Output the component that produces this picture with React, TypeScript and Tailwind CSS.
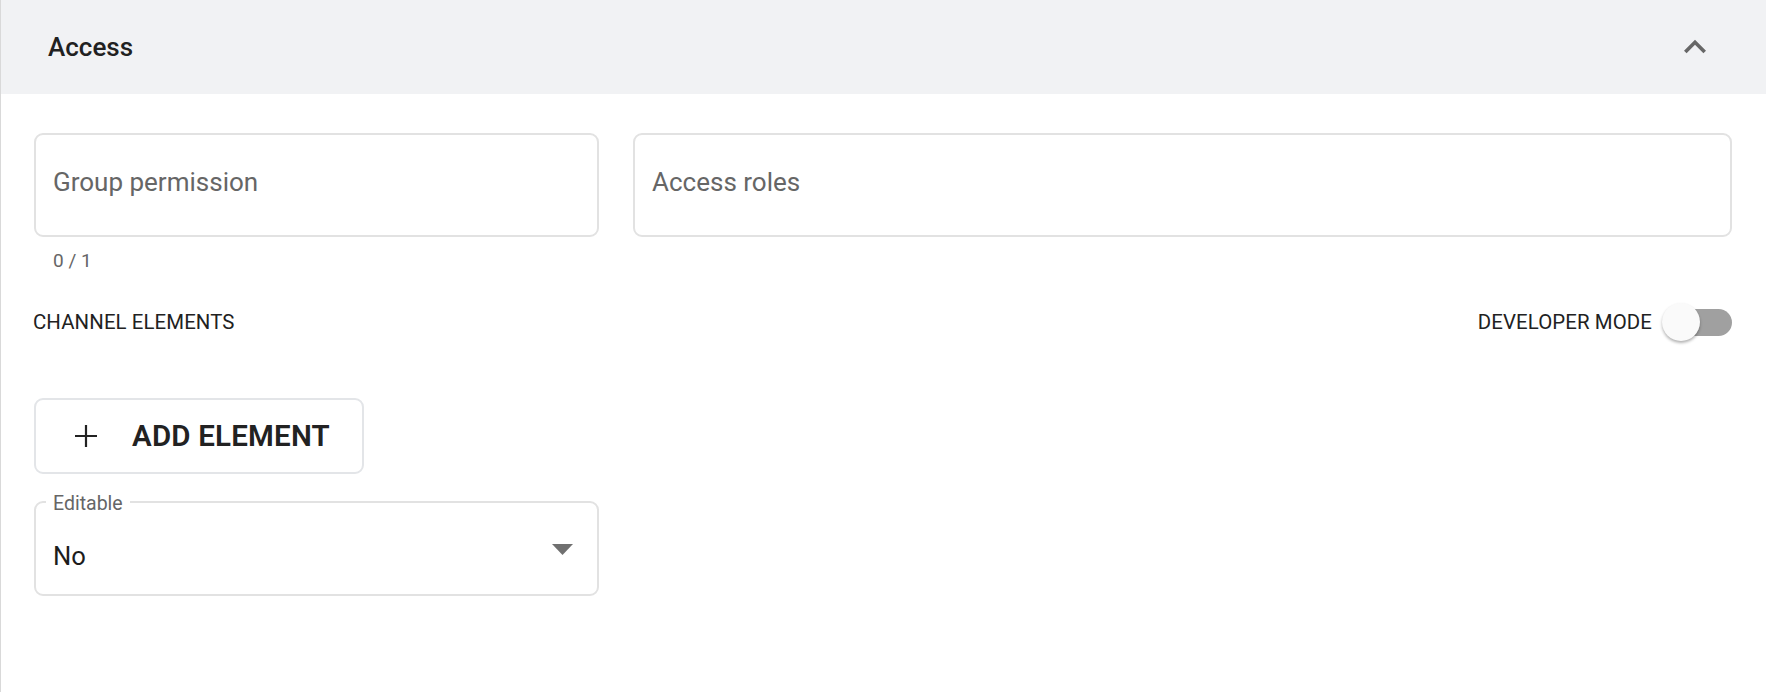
import { useState } from "react";

function ChevronUp() {
  return (
    <svg width="44" height="44" viewBox="0 0 24 24" className="text-[#676767]">
      <path fill="currentColor" d="M12 8l-6 6 1.41 1.41L12 10.83l4.59 4.58L18 14z" />
    </svg>
  );
}

function PlusIcon() {
  return (
    <svg width="24" height="24" viewBox="0 0 24 24" className="text-[#222]">
      <path d="M12 1v22M1 12h22" stroke="currentColor" strokeWidth="2.2" fill="none" />
    </svg>
  );
}

export default function App() {
  const [devMode, setDevMode] = useState(false);

  return (
    <div className="min-h-screen bg-white border-l border-[#d9d9d9] font-['Roboto',sans-serif] text-[#212121]">
      {/* Header */}
      <div className="h-[94px] bg-[#f1f2f4] flex items-center justify-between pl-[47px] pr-[49px]">
        <span className="text-[26px] font-medium">Access</span>
        <ChevronUp />
      </div>

      <div className="pl-[33px] pr-[34px] pt-[39px]">
        {/* Inputs */}
        <div className="flex gap-[34px]">
          <div className="w-[565px]">
            <div className="h-[104px] border-2 border-[#e2e2e2] rounded-[9px] flex items-center pl-[17px]">
              <span className="text-[26px] text-[#666] -mt-[5px]">Group permission</span>
            </div>
            <div className="mt-[13px] pl-[19px] text-[19px] leading-[22px] text-[#666]">0 / 1</div>
          </div>
          <div className="flex-1">
            <div className="h-[104px] border-2 border-[#e2e2e2] rounded-[9px] flex items-center pl-[17px]">
              <span className="text-[26px] text-[#666] -mt-[5px]">Access roles</span>
            </div>
          </div>
        </div>

        {/* Channel elements row */}
        <div className="mt-[30px] h-[40px] flex items-center justify-between">
          <span className="-ml-[1px] text-[20.4px] tracking-[0.1px]">CHANNEL ELEMENTS</span>
          <div className="flex items-center gap-[10px]">
            <span className="text-[20.4px] tracking-[0.1px]">DEVELOPER MODE</span>
            <button
              onClick={() => setDevMode(!devMode)}
              className="relative w-[70px] h-[40px]"
            >
              <span className="absolute right-0 top-[7px] w-[62px] h-[27px] rounded-full bg-[#a0a0a0]" />
              <span className="absolute left-0 top-[1px] w-[38px] h-[38px] rounded-full bg-[#fafafa] shadow-[0_2px_3px_rgba(0,0,0,0.3)]" />
            </button>
          </div>
        </div>

        {/* Add element */}
        <button className="mt-[56px] w-[330px] h-[76px] border-2 border-[#e3e5e8] rounded-[9px] flex items-center pl-[38px]">
          <PlusIcon />
          <span className="ml-[34px] text-[29.5px] font-semibold tracking-[0.2px] text-[#222]">ADD ELEMENT</span>
        </button>

        {/* Editable select */}
        <div className="relative mt-[27px] w-[565px] h-[95px] border-2 border-[#e2e2e2] rounded-[9px] flex items-center justify-between pl-[17px] pr-[24px]">
          <span className="absolute -top-[10px] left-[10px] bg-white px-[7px] text-[19.5px] leading-[22px] text-[#666]">
            Editable
          </span>
          <span className="text-[25.6px] text-[#1c1c1c] mt-[15px]">No</span>
          <svg width="21" height="11" viewBox="0 0 21 11" className="mt-[2px]">
            <path d="M0 0h21L10.5 11z" fill="#707070" />
          </svg>
        </div>
      </div>
    </div>
  );
}
